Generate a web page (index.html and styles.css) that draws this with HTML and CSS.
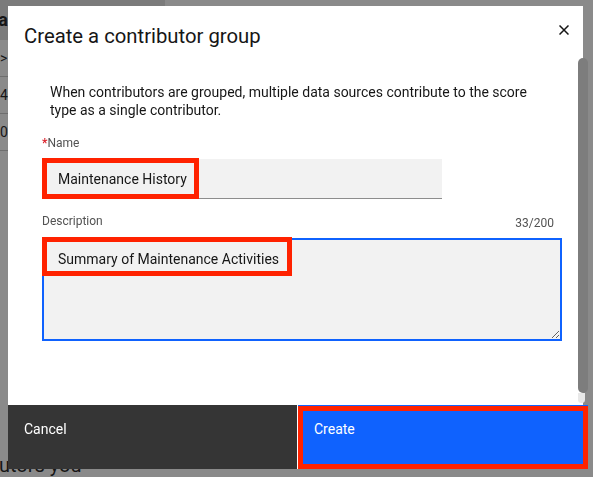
FILE: index.html
```html
<!DOCTYPE html>
<html lang="en">
<head>
<meta charset="utf-8">
<title>Create a contributor group</title>
<link rel="stylesheet" href="styles.css">
</head>
<body>
<div class="under">
  <div class="under-top">
    <div class="under-side">
      <div class="side-head"><span>Year</span></div>
      <div class="side-row">&gt;1</div>
      <div class="side-row">40</div>
      <div class="side-row">0</div>
    </div>
    <div class="under-main"><span class="col-head">Description</span></div>
  </div>
  <h2 class="under-title"><span>Contributors you</span></h2>
</div>
<div class="overlay"></div>
<div class="modal" role="dialog" aria-label="Create a contributor group">
  <div class="modal-main">
    <header class="modal-header">
      <h1>Create a contributor group</h1>
      <button class="close" aria-label="Close">
        <svg width="10" height="10" viewBox="0 0 10 10"><path d="M0.5 0.5 L9.5 9.5 M9.5 0.5 L0.5 9.5" stroke="#161616" stroke-width="1.5" fill="none"/></svg>
      </button>
    </header>
    <div class="body-row">
      <div class="body">
        <p>When contributors are grouped, multiple data sources contribute to the score type as a single contributor.</p>
        <div class="field">
          <label for="name"><span class="req">*</span>Name</label>
          <div class="input-wrap">
            <input id="name" type="text" value="Maintenance History">
            <span class="hl hl-name"></span>
          </div>
        </div>
        <div class="field">
          <div class="label-row"><label for="desc">Description</label><span class="counter">33/200</span></div>
          <div class="ta-wrap">
            <textarea id="desc">Summary of Maintenance Activities</textarea>
            <span class="hl hl-desc"></span>
          </div>
        </div>
      </div>
      <div class="scrollbar"><div class="thumb"></div><div class="track-end"></div></div>
    </div>
  </div>
  <footer class="modal-footer">
    <button class="btn secondary">Cancel</button>
    <button class="btn primary">Create</button>
  </footer>
</div>
</body>
</html>
```
FILE: styles.css
```css
* { box-sizing: border-box; }
body {
  margin: 0;
  font-family: Roboto, "Noto Sans", sans-serif;
  background: #fff;
  height: 477px;
  overflow: hidden;
  color: #161616;
}

/* underlying page */
.under {
  height: 477px;
  display: flex;
  flex-direction: column;
  overflow: hidden;
}
.under-top { display: flex; }
.under-side { width: 165px; flex: none; }
.side-head {
  height: 40px;
  background: #e0e0e0;
  font-weight: 700;
  font-size: 18px;
  line-height: 40px;
  white-space: nowrap;
  overflow: hidden;
}
.side-head span { display: inline-block; margin-left: -22px; }
.side-row {
  height: 37px;
  border-bottom: 1px solid #c6c6c6;
  font-size: 14px;
  line-height: 36px;
  white-space: nowrap;
}
.under-main { flex: 1; padding-left: 32px; }
.col-head {
  display: inline-block;
  margin-top: -12px;
  font-size: 13px;
  line-height: 16px;
  border-bottom: 1px dotted #161616;
}
.under-title {
  margin: auto 0 -2px;
  font-size: 20px;
  line-height: 28px;
  font-weight: 400;
  white-space: nowrap;
}
.under-title span { display: inline-block; margin-left: -66px; }

.overlay {
  position: fixed;
  inset: 0;
  background: rgba(22, 22, 22, 0.5);
}

/* modal */
.modal {
  position: fixed;
  left: 8px;
  top: 6px;
  width: 580px;
  height: 463px;
  display: flex;
  flex-direction: column;
}
.modal-main {
  flex: 1;
  min-height: 0;
  margin-right: 5px;
  background: #fff;
  display: flex;
  flex-direction: column;
}
.modal-header {
  display: flex;
  align-items: flex-start;
  padding: 16px 0 0 16px;
}
.modal-header h1 {
  flex: 1;
  margin: 0;
  font-size: 20.3px;
  line-height: 28px;
  font-weight: 400;
  color: #161616;
}
.close {
  width: 48px;
  height: 48px;
  margin: -16px -5px 0 0;
  border: 0;
  padding: 0;
  background: transparent;
  display: flex;
  align-items: center;
  justify-content: center;
}
.body-row {
  flex: 1;
  min-height: 0;
  display: flex;
}
.body {
  flex: 1;
  padding: 29px 0 0 34px;
}
.body p {
  margin: 0 0 16px;
  padding-left: 8px;
  width: 512px;
  font-size: 14px;
  line-height: 18px;
  color: #161616;
}
.field label {
  display: block;
  font-size: 12px;
  line-height: 16px;
  color: #525252;
  margin-bottom: 8px;
}
.req { color: #da1e28; font-weight: 700; }
.field + .field { margin-top: 14px; }
.input-wrap { position: relative; width: 400px; }
.input-wrap input {
  display: block;
  width: 400px;
  height: 40px;
  border: 0;
  border-bottom: 1px solid #8d8d8d;
  background: #f2f2f2;
  padding: 0 16px;
  font-family: inherit;
  font-size: 14px;
  color: #161616;
  outline: none;
}
.label-row {
  display: flex;
  justify-content: space-between;
  align-items: flex-end;
  width: 512px;
  margin-bottom: 7px;
}
.label-row label { margin-bottom: 2px; }
.counter {
  font-size: 12px;
  line-height: 16px;
  color: #525252;
}
.ta-wrap { position: relative; width: 520px; }
.ta-wrap textarea {
  display: block;
  width: 520px;
  height: 103px;
  border: 2px solid #0f62fe;
  background: #f2f2f2;
  padding: 10px 14px;
  font-family: inherit;
  font-size: 14px;
  line-height: 18px;
  color: #161616;
  outline: none;
}
.hl {
  position: absolute;
  border: 5px solid #ff2200;
  pointer-events: none;
}
.hl-name { top: -1px; left: 0; width: 157px; height: 41px; }
.hl-desc { top: -1px; left: 0; width: 250px; height: 39px; }

.scrollbar {
  width: 10px;
  margin-right: -5px;
  padding-top: 4px;
  display: flex;
  flex-direction: column;
  background: linear-gradient(to right, #fff 5px, transparent 5px);
}
.thumb {
  height: 335px;
  background: #7d7d7d;
  border-radius: 5px;
}
.track-end {
  height: 10px;
  width: 7px;
  background: #e8e8e8;
  border-radius: 0 0 4px 4px;
}

.modal-footer {
  height: 64px;
  flex: none;
  display: grid;
  grid-template-columns: 289px 290px;
  column-gap: 1px;
  background: #fff;
}
.btn {
  border: 0;
  margin: 0;
  display: flex;
  align-items: flex-start;
  justify-content: flex-start;
  padding: 15px 16px 0;
  font-family: inherit;
  font-size: 14px;
  line-height: 18px;
  color: #fff;
  height: 64px;
}
.btn.secondary { background: #353535; }
.btn.primary { background: #0f62fe; position: relative; }
.btn.primary::after {
  content: "";
  position: absolute;
  top: 1px;
  left: 0;
  right: 0;
  bottom: 0;
  border: 5px solid #ff2200;
}
```
